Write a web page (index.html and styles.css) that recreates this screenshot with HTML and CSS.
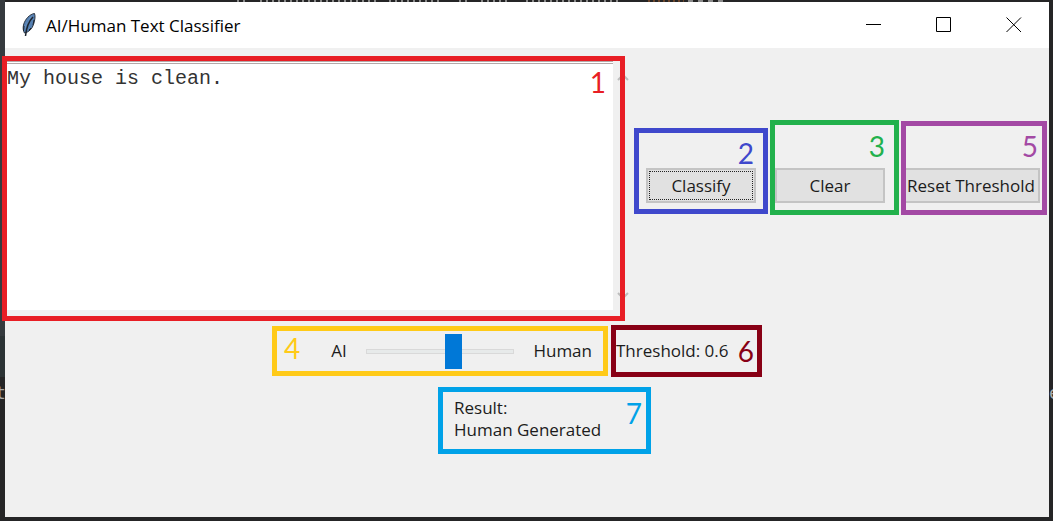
FILE: index.html
```html
<!DOCTYPE html>
<html lang="en">
<head>
<meta charset="utf-8">
<title>AI/Human Text Classifier</title>
<link rel="stylesheet" href="styles.css">
</head>
<body>
<svg class="backdrop-line" width="500" height="2" aria-hidden="true">
  <path d="M1 1H10M24 1H140M153 1H205M223 1H235M245 1H272M290 1H384" stroke="#8a8a8a" stroke-width="2" stroke-dasharray="2 4"/>
  <path d="M412 1H448" stroke="#6b4429" stroke-width="2" stroke-dasharray="2 3"/>
  <path d="M452 1H492" stroke="#8a8a8a" stroke-width="2" stroke-dasharray="5 5"/>
</svg>
<span class="backdrop-char backdrop-left" aria-hidden="true">t</span>
<span class="backdrop-char backdrop-right" aria-hidden="true">e</span>
<div class="window">
  <header class="titlebar">
    <svg class="feather" width="16" height="24" viewBox="0 0 16 24" aria-hidden="true">
      <path d="M13.500 0.500C9 1 4 6 2.500 12C1.800 15 2.200 18 3.500 20C8 19 11 16 12.500 11.500C14 7 14.500 3 13.500 0.500Z" fill="#5681b3" stroke="#2a3340" stroke-width="1"/>
      <path d="M12.500 2C8 5 5 10 4 16L5.500 11C7 7 9 5 12.500 2Z" fill="#a9c6e4"/>
      <path d="M12 4C8 8 5.500 13 4.500 23" fill="none" stroke="#1d2530" stroke-width="1.500"/>
      <path d="M3 13L2.500 18M10 15L8 17M13 7L12 12" stroke="#1d2530"/>
    </svg>
    <h1 class="title">AI/Human Text Classifier</h1>
    <div class="controls">
      <button class="control" type="button" aria-label="Minimize"><svg width="16" height="16" viewBox="0 0 16 16"><path d="M0 7.500H15" stroke="#000"/></svg></button>
      <button class="control" type="button" aria-label="Maximize"><svg width="16" height="16" viewBox="0 0 16 16"><path d="M0.500 0.500H14.500V14.500H0.500Z" fill="none" stroke="#000"/></svg></button>
      <button class="control" type="button" aria-label="Close"><svg width="16" height="16" viewBox="0 0 16 16"><path d="M0.500 0.500L15 15M15 0.500L0.500 15" stroke="#000" stroke-width="1"/></svg></button>
    </div>
  </header>
  <main class="content">
    <div class="top-row">
      <section class="mark mark-red editor">
        <textarea class="text" aria-label="Text to classify" spellcheck="false">My house is clean.</textarea>
        <span class="number number-editor">1</span>
        <svg class="arrow arrow-up" width="12" height="8" viewBox="0 0 12 8" aria-hidden="true"><path d="M1 7L6 2L11 7" fill="none" stroke="#bdbdbd" stroke-width="2"/></svg>
        <svg class="arrow arrow-down" width="12" height="8" viewBox="0 0 12 8" aria-hidden="true"><path d="M1 1L6 6L11 1" fill="none" stroke="#bdbdbd" stroke-width="2"/></svg>
      </section>
      <div class="actions">
        <section class="mark mark-blue action action-classify"><span class="number">2</span><button class="button focused" type="button">Classify</button></section>
        <section class="mark mark-green action action-clear"><span class="number">3</span><button class="button" type="button">Clear</button></section>
        <section class="mark mark-purple action action-reset"><span class="number">5</span><button class="button" type="button">Reset Threshold</button></section>
      </div>
    </div>
    <div class="threshold-row">
      <section class="mark mark-yellow scale">
        <span class="number">4</span>
        <label class="scale-ai" for="threshold">AI</label>
        <input class="slider" id="threshold" type="range" min="0" max="1" step="0.1" value="0.6">
        <span>Human</span>
      </section>
      <section class="mark mark-maroon threshold">
        <output for="threshold">Threshold: 0.6</output>
        <span class="number">6</span>
      </section>
    </div>
    <div class="result-row">
      <section class="mark mark-cyan result">
        <p class="result-text">Result:<br>Human Generated</p>
        <span class="number">7</span>
      </section>
    </div>
  </main>
</div>
</body>
</html>
```
FILE: styles.css
```css
* { box-sizing: border-box; }

body {
  margin: 0;
  min-height: 100vh;
  display: flex;
  padding: 2px 4px 4px 5px;
  background: linear-gradient(#353a3e 336px, #2c3335 336px, #2c3335 377px, #252526 377px) left / 5px 100% no-repeat, #252526;
  font-family: "Open Sans", "Noto Sans", sans-serif;
  font-size: 17px;
  line-height: 22px;
  color: #1c1c1c;
}

.backdrop-line { position: absolute; top: 0; left: 236px; }

.backdrop-char {
  position: absolute;
  top: 382px;
  color: #a8a8a8;
  font-family: "DejaVu Sans Mono", monospace;
  font-size: 18px;
}
.backdrop-left { left: -5px; }
.backdrop-right { right: -7px; width: 11px; overflow: hidden; }

.window {
  position: relative;
  flex: 1;
  min-width: 0;
  display: flex;
  flex-direction: column;
  background: #f0f0f0;
}

.titlebar {
  height: 46px;
  display: flex;
  align-items: center;
  gap: 9px;
  padding-left: 16px;
  background: #fff;
}
.title { margin: 0; flex: 1; padding-top: 1px; font-size: 17px; font-weight: 400; color: #000; }
.controls { display: flex; }
.control {
  width: 70px;
  height: 46px;
  padding: 0;
  border: 0;
  background: none;
  display: grid;
  place-items: center;
}

.content { flex: 1; padding: 8px 2px 0 0; }

.mark { border: 5px solid; }
.mark-red { border-color: #e81e25; }
.mark-blue { border-color: #3f48cc; }
.mark-green { border-color: #22b14c; }
.mark-purple { border-color: #a349a4; }
.mark-yellow { border-color: #ffca18; }
.mark-maroon { border-color: #880015; }
.mark-cyan { border-color: #00a2e8; }

.number { font-family: Lato, sans-serif; font-size: 28px; line-height: 28px; }
.mark-red .number { color: #e81e25; }
.mark-blue .number { color: #3f48cc; }
.mark-green .number { color: #22b14c; }
.mark-purple .number { color: #a349a4; }
.mark-yellow .number { color: #ffca18; }
.mark-maroon .number { color: #880015; }
.mark-cyan .number { color: #00a2e8; }

.top-row { display: flex; align-items: flex-start; gap: 9px; isolation: isolate; }

.editor {
  position: relative;
  flex: 1;
  height: 265px;
  margin-left: -3px;
  padding-right: 7px;
}
.text {
  display: block;
  width: 100%;
  height: 249px;
  padding: 3px 0;
  border: 0;
  border-top: 3px double #b4a8a8;
  outline: 0;
  resize: none;
  background: #fff;
  color: #333;
  font: 20px/24px "Liberation Mono", monospace;
}
.number-editor { position: absolute; top: 7px; right: 14px; }
.arrow { position: absolute; right: -9px; z-index: -1; }
.arrow-up { top: 12px; }
.arrow-down { bottom: 16px; }

.actions { display: flex; align-items: flex-end; gap: 2px; padding-top: 64px; }
.action { display: flex; flex-direction: column; }
.action .number { align-self: flex-end; }
.action-classify { width: 134px; padding: 6px 7px; margin-bottom: 1px; }
.action-classify .number { margin: 0 2px 1px 0; }
.action-clear { width: 129px; padding: 7px 9px 7px 0; }
.action-clear .number { margin: 0 0 8px 0; }
.action-reset { width: 146px; padding: 6px 2px 7px 0; }
.action-reset .number { margin: 0 2px 8px 0; }
.button {
  width: 100%;
  height: 35px;
  padding: 0;
  border: 2px solid #c4c4c4;
  background: #e1e1e1;
  color: #1c1c1c;
  font: inherit;
  white-space: nowrap;
}
.action-reset .button { border-left: 0; padding-right: 2px; }
.focused { outline: 1px dotted #222; outline-offset: -4px; }

.threshold-row {
  display: flex;
  align-items: center;
  justify-content: center;
  gap: 3px;
  padding: 4px 18px 0 0;
}
.scale { width: 336px; height: 50px; display: flex; align-items: center; padding: 0 11px 0 7px; }
.scale .number { margin-bottom: 6px; }
.scale-ai { margin: 0 19px 0 31px; }
.slider {
  appearance: none;
  flex: 1;
  min-width: 0;
  height: 35px;
  margin: 0 19px 0 0;
  background: none;
}
.slider::-webkit-slider-runnable-track { height: 5px; border: 1px solid #d9d9d9; background: #e7eaea; }
.slider::-webkit-slider-thumb { appearance: none; width: 17px; height: 35px; margin-top: -16px; background: #0078d7; }
.threshold { width: 151px; height: 52px; display: flex; align-items: center; justify-content: space-between; padding-right: 3px; }
.threshold output { white-space: nowrap; }

.result-row { display: flex; justify-content: center; padding: 10px 0 0 37px; }
.result { width: 213px; height: 67px; display: flex; align-items: flex-start; justify-content: space-between; padding: 5px 4px 0 11px; }
.result-text { margin: 0; white-space: nowrap; }
.result .number { margin-top: 2px; }
```
